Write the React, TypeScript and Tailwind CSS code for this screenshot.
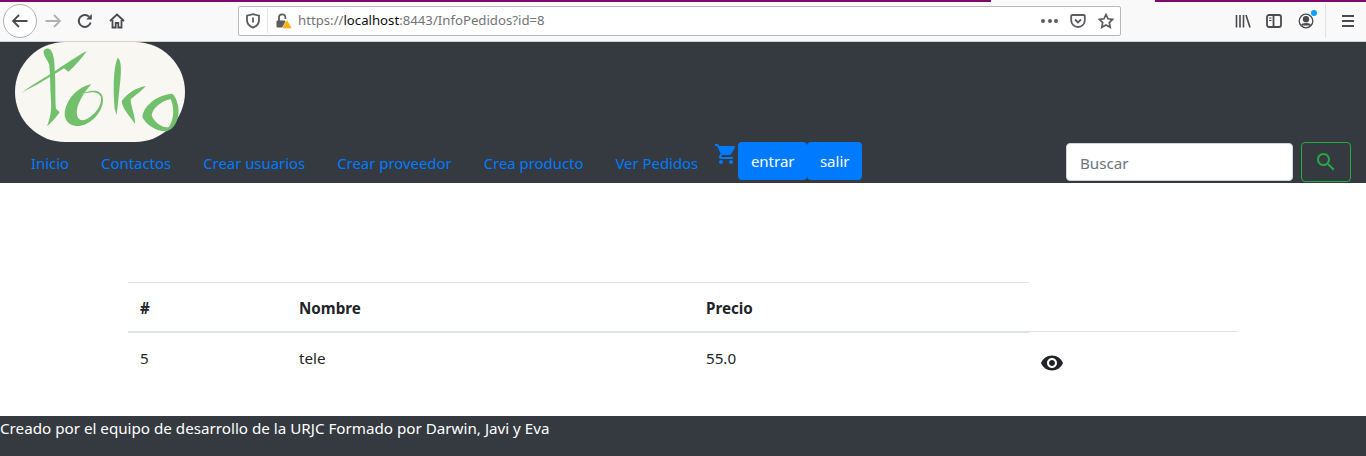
import React from "react";

const links = ["Inicio", "Contactos", "Crear usuarios", "Crear proveedor", "Crea producto", "Ver Pedidos"];
const pageFont = "font-['Noto_Sans','Open_Sans',sans-serif]";

const Logo = () => (
  <svg viewBox="45 125 510 300" className="w-[170px] h-[100px] block">
    <rect x="45" y="125" width="510" height="300" rx="150" ry="150" fill="#f8f7f2" />
    <g fill="#72bf6c" fillRule="evenodd">
      <path d="M131 152C136 140 153 142 158 160C165 182 163 200 165 225C167 260 165 300 168 325L179 336C168 350 155 368 141 378C150 355 155 335 153 300C150 260 151 225 148 195C145 180 129 168 131 152Z" />
      <path d="M65 277C95 255 135 232 165 212C195 192 230 168 260 152C248 170 225 198 205 214L192 204C150 230 105 258 65 277Z" />
      <path d="M274 252C235 258 196 298 194 342C195 372 226 386 257 372C294 354 314 315 308 290C302 266 272 266 243 283C270 272 298 272 303 292C306 315 285 345 255 358C238 364 228 350 231 328C236 302 254 274 274 252Z" />
      <path d="M353 172C364 180 364 205 361 240L350 345L344 325C339 270 339 205 353 172Z" />
      <path d="M437 257C410 262 382 278 365 302C366 325 392 350 405 371C406 345 392 318 392 297C407 284 427 270 437 257Z" />
      <path d="M517 280C475 283 432 312 427 350C440 378 478 396 502 392C528 385 542 345 533 312C530 298 524 286 517 280ZM512 296C522 318 524 352 507 380C487 385 462 365 455 345C458 322 486 302 512 296Z" />
    </g>
  </svg>
);

const BrowserBar = () => (
  <div className="relative h-[42px] bg-[#f9f9fa] border-b border-[#cfcfd0] flex items-center font-['Noto_Sans',sans-serif]">
    <div className="absolute top-0 left-0 w-[991px] h-[2px] bg-[#7a0a6c]" />
    <div className="absolute top-0 right-0 w-[211px] h-[2px] bg-[#7a0a6c]" />
    <div className="ml-[3px] w-[34px] h-[34px] rounded-full border border-[#b1b1b3] bg-white flex items-center justify-center">
      <svg viewBox="0 0 18 18" className="w-[18px] h-[18px]" fill="none" stroke="#4a4a4f" strokeWidth="1.8">
        <path d="M16.5 9H2M8 3L2 9l6 6" />
      </svg>
    </div>
    <svg viewBox="0 0 18 18" className="w-[18px] h-[18px] ml-[7px]" fill="none" stroke="#b1b1b3" strokeWidth="1.8">
      <path d="M1.5 9H16M10 3l6 6-6 6" />
    </svg>
    <svg viewBox="0 0 16 16" className="w-4 h-4 ml-[15px]" fill="none" stroke="#4a4a4f" strokeWidth="2">
      <path d="M13.6 9.5A6 6 0 1 1 12 3.6" />
      <path d="M14.8 1v5.6H9.2z" fill="#4a4a4f" stroke="none" />
    </svg>
    <svg viewBox="0 0 16 16" className="w-4 h-4 ml-[16px]" fill="none" stroke="#4a4a4f" strokeWidth="1.8">
      <path d="M1 8l7-6.5L15 8M3.5 7v7.5h3.2V10h2.6v4.5h3.2V7" />
    </svg>
    <div className="ml-[113px] w-[883px] h-[30px] bg-white border border-[#b9b9bb] rounded-[2px] flex items-center text-[13.2px]">
      <svg viewBox="0 0 16 16" className="w-4 h-4 ml-[6px]" fill="none" stroke="#5b5b60" strokeWidth="1.8">
        <path d="M8 1.2l6 1.4v4.6c0 3.6-2.6 6-6 7.4-3.400-1.400-6-3.800-6-7.400V2.600z" />
        <path d="M8 4.500v5" />
      </svg>
      <div className="w-px h-[24px] bg-[#e4e4e6] ml-[6px]" />
      <svg viewBox="0 0 16 16" className="w-[16px] h-[16px] ml-[8px]">
        <path d="M3 8V4.500a3.200 3.200 0 0 1 6.400 0V6" fill="none" stroke="#5b5b60" strokeWidth="1.800" />
        <rect x="0.500" y="7.500" width="9" height="7" rx="1" fill="#5b5b60" />
        <path d="M11 6.500L16 15.500H6z" fill="#ffb000" stroke="#f9f9fa" strokeWidth="0.600" />
      </svg>
      <span className="ml-[6px] text-[#737378]">https://<span className="text-[#0c0c0d]">localhost</span>:8443/InfoPedidos?id=8</span>
      <div className="ml-auto flex items-center mr-[6px]">
        <span className="flex gap-[2.500px]">
          <span className="w-[4px] h-[4px] rounded-full bg-[#5b5b60]" />
          <span className="w-[4px] h-[4px] rounded-full bg-[#5b5b60]" />
          <span className="w-[4px] h-[4px] rounded-full bg-[#5b5b60]" />
        </span>
        <svg viewBox="0 0 16 16" className="w-4 h-4 ml-[12px]" fill="none" stroke="#5b5b60" strokeWidth="1.800">
          <path d="M2.200 2h11.600c.6 0 1 .4 1 1v4.500c0 3.700-3.200 6.500-6.800 6.500S1.200 11.200 1.200 7.500V3c0-.6.4-1 1-1z" />
          <path d="M5 6.500l3 3 3-3" />
        </svg>
        <svg viewBox="0 0 16 16" className="w-4 h-4 ml-[12px]" fill="none" stroke="#5b5b60" strokeWidth="1.700">
          <path d="M8 1.500l2 4.300 4.700.6-3.400 3.200.9 4.700L8 12l-4.200 2.300.9-4.700L1.300 6.400 6 5.800z" />
        </svg>
      </div>
    </div>
    <svg viewBox="0 0 16 16" className="w-4 h-4 ml-[114px]" fill="none" stroke="#4a4a4f" strokeWidth="1.600">
      <path d="M1.500 2v12.500M5 2v12.500M8.500 2v12.500M11 2l4 12.500" />
    </svg>
    <svg viewBox="0 0 16 16" className="w-4 h-4 ml-[15px]" fill="none" stroke="#4a4a4f" strokeWidth="1.800">
      <rect x="1" y="2" width="14" height="12" rx="2" />
      <path d="M7.500 2v12" />
      <path d="M3 5h2.500M3 7.500h2.500" strokeWidth="1.200" />
    </svg>
    <div className="relative ml-[16px] w-4 h-4">
      <svg viewBox="0 0 16 16" className="w-4 h-4" fill="none" stroke="#4a4a4f" strokeWidth="1.300">
        <circle cx="8" cy="8" r="6.800" />
        <circle cx="8" cy="6.200" r="2.500" fill="#4a4a4f" />
        <path d="M3.500 12.500c1-2.500 8-2.500 9 0" fill="#4a4a4f" />
      </svg>
      <span className="absolute -top-[3px] -right-[3px] w-[6px] h-[6px] rounded-full bg-[#0a9eff]" />
    </div>
    <div className="w-px h-[34px] bg-[#e1e1e2] ml-[11px]" />
    <svg viewBox="0 0 14 14" className="w-[14px] h-[14px] ml-[15px]" fill="none" stroke="#4a4a4f" strokeWidth="1.800">
      <path d="M1 2h12M1 7h12M1 12h12" />
    </svg>
  </div>
);

const Navbar = () => (
  <nav className={`h-[141px] bg-[#343a40] flex flex-col px-[15px] ${pageFont}`}>
    <Logo />
    <div className="flex">
      <ul className="flex">
        {links.map((l) => (
          <li key={l} className="h-[41px] px-4 pt-[8px] text-[#007bff] text-[14.9px] leading-[27px]">{l}</li>
        ))}
      </ul>
      <svg viewBox="0 0 24 24" className="w-6 h-6 fill-[#007bff]">
        <path d="M7 18c-1.100 0-1.990.9-1.990 2S5.900 22 7 22s2-.9 2-2-.9-2-2-2zM1 2v2h2l3.600 7.590-1.350 2.450c-.16.28-.25.61-.25.96 0 1.100.9 2 2 2h12v-2H7.420c-.14 0-.25-.11-.25-.25l.03-.12.9-1.630h7.450c.75 0 1.410-.41 1.750-1.030l3.580-6.490c.08-.14.12-.31.12-.48 0-.55-.45-1-1-1H5.210l-.94-2H1zm16 16c-1.100 0-1.990.9-1.990 2s.89 2 1.990 2 2-.9 2-2-.9-2-2-2z" />
      </svg>
      <button className="h-[38px] w-[69px] bg-[#007bff] text-white text-[15px] rounded-[4px]">entrar</button>
      <button className="h-[38px] w-[55px] bg-[#007bff] text-white text-[15px] rounded-[4px]">salir</button>
      <form className="ml-auto flex items-start">
        <input
          placeholder="Buscar"
          className="mt-px w-[227px] h-[38px] bg-white rounded-[4px] border border-[#ced4da] pl-[13px] pt-[2px] text-[15.2px] placeholder:text-[#6c757d]"
        />
        <button type="button" className="ml-2 w-[50px] h-[40px] border border-[#28a745] rounded-[4px] flex items-center justify-center">
          <svg viewBox="0 0 24 24" className="w-6 h-6 fill-[#28a745]">
            <path d="M15.500 14h-.79l-.28-.27C15.410 12.590 16 11.110 16 9.500 16 5.910 13.090 3 9.500 3S3 5.910 3 9.500 5.910 16 9.500 16c1.610 0 3.090-.59 4.230-1.570l.27.28v.79l5 4.990L20.490 19l-4.990-5zm-6 0C7.010 14 5 11.990 5 9.500S7.010 5 9.500 5 14 7.010 14 9.500 11.990 14 9.500 14z" />
          </svg>
        </button>
      </form>
    </div>
  </nav>
);

const Tabla = () => (
  <main className={`h-[233px] pt-[99px] pl-[128px] text-[#212529] text-[15.2px] ${pageFont}`}>
    <table className="w-[1110px] table-fixed border-collapse">
      <colgroup>
        <col className="w-[159px]" />
        <col className="w-[407px]" />
        <col className="w-[335px]" />
        <col />
      </colgroup>
      <thead>
        <tr>
          <th className="h-[49px] px-3 pt-[4px] text-left font-bold border-t border-b-2 border-[#dee2e6]">#</th>
          <th className="h-[49px] px-3 pt-[4px] text-left font-bold border-t border-b-2 border-[#dee2e6]">Nombre</th>
          <th className="h-[49px] px-3 pt-[4px] text-left font-bold border-t border-b-2 border-[#dee2e6]">Precio</th>
        </tr>
      </thead>
      <tbody>
        <tr>
          <td className="p-3 pt-[14px] align-top border-t border-[#dee2e6]">5</td>
          <td className="p-3 pt-[14px] align-top border-t border-[#dee2e6]">tele</td>
          <td className="p-3 pt-[14px] align-top border-t border-[#dee2e6]">55.0</td>
          <td className="pl-[11px] pt-[19px] align-top border-t border-[#dee2e6]">
            <svg viewBox="0 0 24 24" className="w-6 h-6 fill-[#212529]">
              <path d="M12 4.500C7 4.500 2.730 7.610 1 12c1.730 4.390 6 7.500 11 7.500s9.270-3.110 11-7.500c-1.730-4.390-6-7.500-11-7.500zM12 17c-2.760 0-5-2.240-5-5s2.240-5 5-5 5 2.240 5 5-2.240 5-5 5zm0-8c-1.660 0-3 1.340-3 3s1.340 3 3 3 3-1.340 3-3-1.340-3-3-3z" />
            </svg>
          </td>
        </tr>
      </tbody>
    </table>
  </main>
);

export default function App() {
  return (
    <div className="w-[1366px] h-[456px] overflow-hidden bg-white">
      <BrowserBar />
      <Navbar />
      <Tabla />
      <footer className={`h-[40px] bg-[#343a40] text-white text-[15.2px] leading-6 ${pageFont}`}>
        Creado por el equipo de desarrollo de la URJC Formado por Darwin, Javi y Eva
      </footer>
    </div>
  );
}
